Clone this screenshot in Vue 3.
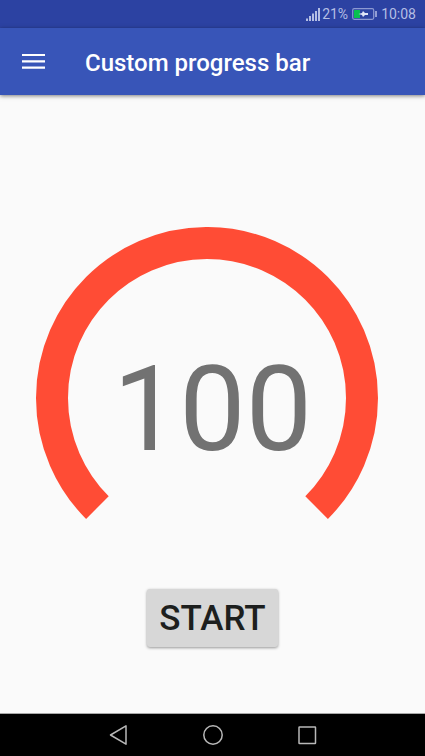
<script setup>
import { ref, computed } from 'vue'

const progress = ref(100)
const arc = computed(() => `${progress.value} 100`)
let timer = null

function start() {
  clearInterval(timer)
  progress.value = 0
  timer = setInterval(() => {
    progress.value += 1
    if (progress.value >= 100) clearInterval(timer)
  }, 30)
}
</script>

<template>
  <div class="screen">
    <div class="status">
      <svg class="signal" width="14" height="13" viewBox="0 0 14 13" aria-hidden="true">
        <path d="M1 10.500v2.500M4 8v5M7 5.500v7.500M10 3v10M13 0v13" stroke="#b4bee4" stroke-width="2" fill="none" />
      </svg>
      <span>21%</span>
      <svg class="battery" width="25" height="12" viewBox="0 0 25 12" aria-hidden="true">
        <rect x="0.700" y="0.700" width="21" height="10.600" rx="1.500" fill="none" stroke="#8d9ad2" stroke-width="1.200" />
        <rect x="2" y="2" width="6" height="8" fill="#08c050" />
        <path d="M6.500 6L10 5L11 3L13 5H16V7H13L11 9L10 7Z" fill="#dfe5f8" />
        <path d="M24 3v6" stroke="#b4bee4" stroke-width="1.500" />
      </svg>
      <span>10:08</span>
    </div>
    <header class="bar">
      <button class="menu" type="button" aria-label="Menu">
        <svg width="23" height="16" viewBox="0 0 23 16" aria-hidden="true">
          <path d="M0 1h23M0 7.300h23M0 13.600h23" stroke="#fff" stroke-width="2.200" />
        </svg>
      </button>
      <h1>Custom progress bar</h1>
    </header>
    <main>
      <div class="gauge">
        <svg viewBox="0 0 425 292" aria-hidden="true">
          <path d="M97.400 280.600A155 155 0 1 1 316.600 280.600" pathLength="100" :stroke-dasharray="arc" fill="none" stroke="#ff4c35" stroke-width="32" />
        </svg>
        <span class="value">{{ progress }}</span>
      </div>
      <button class="start" type="button" @click="start">START</button>
    </main>
    <nav class="keys">
      <button type="button" aria-label="Back">
        <svg width="22" height="22" viewBox="0 0 22 22"><path d="M18 1.800V20.200L2.500 11Z" /></svg>
      </button>
      <button type="button" aria-label="Home">
        <svg width="22" height="22" viewBox="0 0 22 22"><circle cx="11" cy="11" r="9.200" /></svg>
      </button>
      <button type="button" aria-label="Recent apps">
        <svg width="22" height="22" viewBox="0 0 22 22"><rect x="3" y="3" width="16.500" height="16.500" rx="0.500" /></svg>
      </button>
    </nav>
  </div>
</template>

<style>
body {
  margin: 0;
  background: #fafafa;
}
</style>

<style scoped>
.screen {
  display: flex;
  flex-direction: column;
  min-height: 100vh;
  background: #fafafa;
  font-family: Roboto, "Liberation Sans", sans-serif;
}
button {
  margin: 0;
  border: 0;
  font-family: inherit;
  cursor: pointer;
}
svg {
  display: block;
}
.status {
  display: flex;
  align-items: center;
  justify-content: flex-end;
  height: 28px;
  padding-right: 9px;
  background: #2c42a2;
  color: #b4bee4;
  font-size: 14px;
  line-height: 28px;
}
.signal {
  margin-right: 2px;
}
.battery {
  margin: 0 4px;
}
.bar {
  display: flex;
  align-items: center;
  gap: 40px;
  height: 67px;
  padding-left: 22px;
  background: #3855b8;
  box-shadow: 0 1px 4px rgba(0, 0, 0, 0.5);
}
.menu {
  padding: 0;
  background: none;
}
h1 {
  margin: 0;
  padding-top: 2px;
  color: #fff;
  font-size: 24px;
  font-weight: 500;
  line-height: 32px;
}
main {
  display: flex;
  flex: 1;
  flex-direction: column;
  align-items: center;
  justify-content: center;
  gap: 70px;
  padding-top: 66px;
}
.gauge {
  display: grid;
  width: 100%;
}
.gauge > * {
  grid-area: 1 / 1;
}
.gauge svg {
  width: 100%;
}
.value {
  align-self: end;
  justify-self: center;
  padding-bottom: 49px;
  color: #727272;
  font-size: 118px;
  line-height: 120px;
}
.start {
  padding: 10px 12px 8px;
  border-radius: 3px;
  background: #d7d7d7;
  box-shadow: 0 1px 3px rgba(0, 0, 0, 0.4);
  color: #1d1f1e;
  font-size: 35px;
  font-weight: 500;
  line-height: 40px;
}
.keys {
  display: flex;
  align-items: center;
  justify-content: center;
  gap: 72px;
  height: 42px;
  border-top: 1px solid #a8a8a8;
  background: #000;
}
.keys button {
  padding: 0;
  background: none;
}
.keys path,
.keys circle,
.keys rect {
  fill: none;
  stroke: #b8b8b8;
  stroke-width: 1.5px;
  stroke-linejoin: round;
}
</style>
